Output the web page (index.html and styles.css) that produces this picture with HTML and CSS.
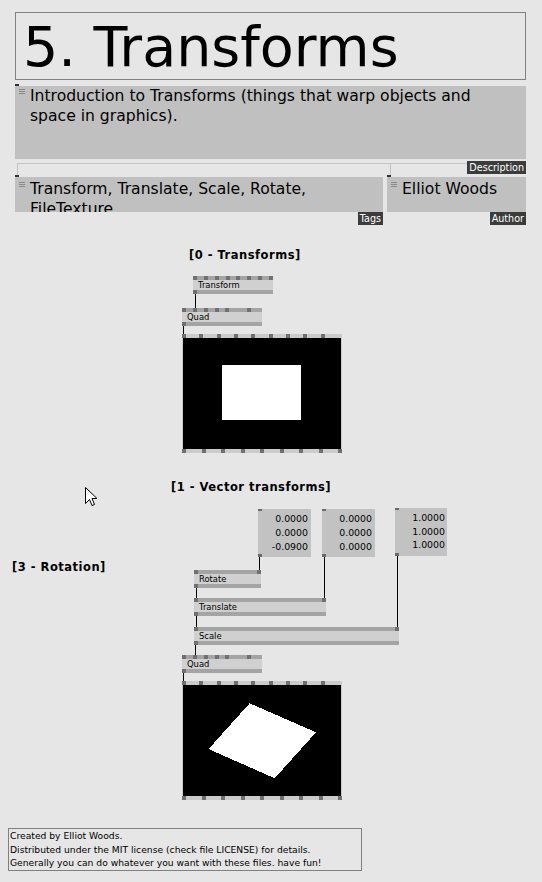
FILE: index.html
```html
<!DOCTYPE html>
<html>
<head>
<meta charset="utf-8">
<link rel="stylesheet" href="styles.css">
</head>
<body>
<div class="patch">
  <header class="meta">
    <div class="title">5. Transforms</div>

    <div class="field">
      <div class="marker"></div>
      <div class="field-box desc-box">
        <svg class="grip" width="6" height="5" viewBox="0 0 6 5"><path d="M0 0.5H6M0 2.5H6M0 4.5H6" stroke="#8a8a8a" stroke-width="1"/></svg>
        <div class="field-text desc-text">Introduction to Transforms (things that warp objects and space in graphics).</div>
      </div>
      <span class="field-label">Description</span>
    </div>

    <div class="links"><div class="seg seg-a"></div><div class="seg seg-b"></div></div>

    <div class="row">
      <div class="field tags-field">
        <div class="marker"></div>
        <div class="field-box short-box">
          <svg class="grip" width="6" height="5" viewBox="0 0 6 5"><path d="M0 0.5H6M0 2.5H6M0 4.5H6" stroke="#8a8a8a" stroke-width="1"/></svg>
          <div class="field-text">Transform, Translate, Scale, Rotate, FileTexture</div>
        </div>
        <span class="field-label">Tags</span>
      </div>
      <div class="field author-field">
        <div class="marker"></div>
        <div class="field-box short-box">
          <svg class="grip" width="6" height="5" viewBox="0 0 6 5"><path d="M0 0.5H6M0 2.5H6M0 4.5H6" stroke="#8a8a8a" stroke-width="1"/></svg>
          <div class="field-text">Elliot Woods</div>
        </div>
        <span class="field-label">Author</span>
      </div>
    </div>
  </header>

  <div class="canvas">
    <div class="section-label lbl-0">[0 - Transforms]</div>

    <div class="node n-transform">
      <div class="pins"><i></i><i></i><i></i><i></i><i></i><i></i><i></i><i></i></div>
      <div class="node-name">Transform</div>
      <div class="pins out"><i></i></div>
    </div>
    <div class="link l-t-q"></div>

    <div class="node n-quad1">
      <div class="pins"><i></i><i></i><i></i><i></i><i></i><i class="off"></i><i></i><i class="off"></i></div>
      <div class="node-name">Quad</div>
      <div class="pins out"><i></i></div>
    </div>
    <div class="link l-q1-r"></div>

    <div class="renderer r1">
      <div class="rbar"><i></i><i></i><i></i><i></i><i></i><i></i><i></i><i></i><i></i><i class="off"></i></div>
      <div class="screen"><div class="white-rect"></div></div>
      <div class="rbar"><i></i><i></i><i></i><i></i><i></i><i></i><i></i><i></i><i></i></div>
    </div>

    <svg class="cursor" width="13" height="20" viewBox="0 0 13 20"><path d="M0.5 0.5V16.5L4.5 12.5L7 18.5L9.5 17.5L7 11.5H12Z" fill="#fff" stroke="#000" stroke-width="1" stroke-linejoin="miter"/></svg>

    <div class="section-label lbl-1">[1 - Vector transforms]</div>
    <div class="section-label lbl-3">[3 - Rotation]</div>

    <div class="iobox io-1">
      <span class="io-pin io-in"></span>
      <div class="io-values"><div>0.0000</div><div>0.0000</div><div>-0.0900</div></div>
      <span class="io-pin io-out"></span>
    </div>
    <div class="iobox io-2">
      <span class="io-pin io-in"></span>
      <div class="io-values"><div>0.0000</div><div>0.0000</div><div>0.0000</div></div>
      <span class="io-pin io-out"></span>
    </div>
    <div class="iobox io-3">
      <span class="io-pin io-in"></span>
      <div class="io-values"><div>1.0000</div><div>1.0000</div><div>1.0000</div></div>
      <span class="io-pin io-out"></span>
    </div>

    <div class="link l-io1"></div>
    <div class="link l-io2"></div>
    <div class="link l-io3"></div>

    <div class="node n-rotate">
      <div class="pins"><i></i><i></i></div>
      <div class="node-name">Rotate</div>
      <div class="pins out"><i></i></div>
    </div>
    <div class="link l-rot-tr"></div>

    <div class="node n-translate">
      <div class="pins"><i></i><i></i></div>
      <div class="node-name">Translate</div>
      <div class="pins out"><i></i></div>
    </div>
    <div class="link l-tr-sc"></div>

    <div class="node n-scale">
      <div class="pins"><i></i><i></i></div>
      <div class="node-name">Scale</div>
      <div class="pins out"><i></i></div>
    </div>
    <div class="link l-sc-q"></div>

    <div class="node n-quad2">
      <div class="pins"><i></i><i></i><i></i><i></i><i></i><i class="off"></i><i></i><i class="off"></i></div>
      <div class="node-name">Quad</div>
      <div class="pins out"><i></i></div>
    </div>
    <div class="link l-q2-r"></div>

    <div class="renderer r2">
      <div class="rbar"><i></i><i></i><i></i><i></i><i></i><i></i><i></i><i></i><i></i><i class="off"></i></div>
      <div class="screen">
        <svg class="quad-shape" width="158" height="111" viewBox="0 0 158 111" shape-rendering="crispEdges"><polygon points="66.6,18.3 133,47.3 91.6,93.3 25.6,64" fill="#fff"/></svg>
      </div>
      <div class="rbar"><i></i><i></i><i></i><i></i><i></i><i></i><i></i><i></i><i></i></div>
    </div>

    <div class="credits">
      <div>Created by Elliot Woods.</div>
      <div>Distributed under the MIT license (check file LICENSE) for details.</div>
      <div>Generally you can do whatever you want with these files. have fun!</div>
    </div>
  </div>
</div>
</body>
</html>
```

FILE: styles.css
```css
html, body {
  margin: 0;
  padding: 0;
  background: #e6e6e6;
}

.patch {
  position: relative;
  width: 542px;
  height: 882px;
  overflow: hidden;
  background: #e6e6e6;
  font-family: "DejaVu Sans", "Noto Sans", sans-serif;
  color: #000;
}

/* ---------- header (patch meta info) ---------- */
.meta {
  padding: 12px 0 0 15px;
  width: 511px;
}

.title {
  box-sizing: border-box;
  height: 68px;
  border: 1px solid #808080;
  padding: 1px 0 0 7px;
  font-size: 55.5px;
  line-height: 65px;
  white-space: nowrap;
}

.field {
  position: relative;
}

.marker {
  width: 4px;
  height: 2px;
  background: #333;
}

.title + .field {
  margin-top: 4px;
}

.field-box {
  display: flex;
  align-items: flex-start;
  background: #c0c0c0;
  overflow: hidden;
  box-sizing: border-box;
}

.desc-box {
  height: 73px;
}

.short-box {
  height: 35px;
  padding-top: 2px;
}

.grip {
  flex: none;
  display: block;
  margin: 3px 5px 0 4px;
}

.field-text {
  font-size: 15.6px;
  line-height: 20px;
}

.desc-text {
  padding-right: 12px;
}

.field-label {
  position: absolute;
  right: 0;
  top: calc(100% + 2px);
  height: 13px;
  padding: 0 2px;
  background: #3c3c3c;
  color: #fff;
  font-size: 9.6px;
  line-height: 13px;
  white-space: nowrap;
}

.links {
  display: flex;
  margin: 4px 0 0 2px;
  height: 11px;
  border-top: 1px solid #c4c4c4;
}

.seg {
  border-left: 1px solid #c4c4c4;
}

.seg-a {
  width: 372px;
}

.seg-b {
  flex: 1;
}

.row {
  display: flex;
  gap: 4px;
}

.tags-field {
  width: 368px;
}

.author-field {
  width: 139px;
}

.row .field-label {
  top: 100%;
}

/* ---------- canvas (patch nodes) ---------- */
.canvas {
  position: absolute;
  left: 0;
  top: 0;
  width: 542px;
  height: 882px;
}

.section-label {
  position: absolute;
  font-weight: bold;
  font-size: 11.5px;
  letter-spacing: 0.5px;
  line-height: 13px;
  white-space: nowrap;
  color: #000;
}

.lbl-0 { left: 189px; top: 249px; }
.lbl-1 { left: 171px; top: 481px; }
.lbl-3 { left: 12px; top: 561px; }

.node {
  position: absolute;
  display: flex;
  flex-direction: column;
  height: 18px;
  background: #d0d0d0;
}

.pins {
  height: 4px;
  flex: none;
  display: flex;
  justify-content: space-between;
  background: #a4a4a4;
}

.pins i {
  display: block;
  width: 4px;
  height: 100%;
  background: #707070;
}

.pins i.off {
  background: transparent;
}

.pins.out {
  justify-content: flex-start;
}

.node-name {
  height: 10px;
  padding-left: 5px;
  font-size: 8.4px;
  line-height: 10px;
  white-space: nowrap;
}

.n-transform { left: 193px; top: 276px; width: 80px; }
.n-quad1 { left: 182px; top: 308px; width: 80px; }
.n-rotate { left: 194px; top: 570px; width: 67px; }
.n-translate { left: 194px; top: 598px; width: 132px; }
.n-scale { left: 194px; top: 627px; width: 205px; }
.n-quad2 { left: 182px; top: 655px; width: 80px; }

.renderer {
  position: absolute;
  left: 182px;
  width: 160px;
  height: 119px;
  display: flex;
  flex-direction: column;
  background: #cbcbcb;
}

.r1 { top: 334px; }
.r2 { top: 681px; }

.rbar {
  height: 4px;
  flex: none;
  display: flex;
  justify-content: space-between;
}

.rbar i {
  display: block;
  width: 4px;
  height: 100%;
  background: #707070;
}

.rbar i.off {
  background: transparent;
}

.screen {
  position: relative;
  flex: 1;
  margin: 0 1px;
  background: #000;
  overflow: hidden;
}

.white-rect {
  position: absolute;
  left: 39px;
  top: 27px;
  width: 79px;
  height: 55px;
  background: #fff;
}

.quad-shape {
  position: absolute;
  left: 0;
  top: 0;
}

.link {
  position: absolute;
  width: 1px;
  background: #000;
}

.l-t-q { left: 195px; top: 294px; height: 14px; }
.l-q1-r { left: 183px; top: 326px; height: 8px; }
.l-io1 { left: 259px; top: 557px; height: 13px; }
.l-io2 { left: 324px; top: 557px; height: 41px; }
.l-io3 { left: 397px; top: 556px; height: 71px; }
.l-rot-tr { left: 196px; top: 588px; height: 10px; }
.l-tr-sc { left: 196px; top: 616px; height: 11px; }
.l-sc-q { left: 195px; top: 645px; height: 10px; }
.l-q2-r { left: 183px; top: 673px; height: 8px; }

.iobox {
  position: absolute;
  width: 53px;
  height: 48px;
  background: #c2c2c2;
}

.io-1 { left: 258px; top: 509px; }
.io-2 { left: 322px; top: 509px; }
.io-3 { left: 395px; top: 508px; width: 52px; }

.io-pin {
  position: absolute;
  left: 0;
  width: 4px;
  background: #6a6a6a;
}

.io-in { top: 0; height: 2px; }
.io-out { bottom: 0; height: 3px; }

.io-values {
  padding: 3px 3px 0 0;
  text-align: right;
  font-size: 9.4px;
  line-height: 14px;
}

.io-3 .io-values {
  padding-right: 2px;
  line-height: 13.5px;
}

.cursor {
  position: absolute;
  left: 85px;
  top: 487px;
}

.credits {
  position: absolute;
  left: 8px;
  top: 828px;
  width: 354px;
  height: 43px;
  box-sizing: border-box;
  border: 1px solid #808080;
  padding: 0 1px;
  font-size: 9.2px;
  line-height: 13.5px;
  white-space: nowrap;
}
```
